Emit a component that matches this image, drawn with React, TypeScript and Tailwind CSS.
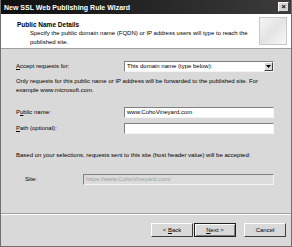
import React from 'react';

function Field({ value, muted }: { value?: string; muted?: boolean }) {
  return (
    <div
      className={`flex-1 h-[11px] flex items-center px-[2px] border border-t-[#808080] border-l-[#808080] border-b-[#f4f4f4] border-r-[#f4f4f4] ${
        muted ? 'bg-[#dcdcdc] text-[#a0a0a0]' : 'bg-white'
      }`}
    >
      {value}
    </div>
  );
}

function Button({ label, active }: { label: React.ReactNode; active?: boolean }) {
  return (
    <div
      className={`w-[42px] h-[14px] flex items-center justify-center bg-[#d9d9d9] border ${
        active
          ? 'border-[#202020] shadow-[inset_1px_1px_0_#fff,inset_-1px_-1px_0_#808080]'
          : 'border-t-white border-l-white border-b-[#404040] border-r-[#404040]'
      }`}
    >
      {label}
    </div>
  );
}

export default function App() {
  return (
    <div className="w-[292px] h-[247px] bg-[#d9d9d9] flex flex-col font-['Liberation_Sans',Arial,sans-serif] text-[6px] leading-[9px] text-black border-l border-r border-b border-[#707070]">
      <div className="h-[14px] shrink-0 flex items-center justify-between pl-[3px] pr-[2px] bg-gradient-to-r from-[#101010] to-[#3c3c3c]">
        <span className="text-white font-bold text-[7px]">New SSL Web Publishing Rule Wizard</span>
        <div className="w-[11px] h-[10px] bg-[#d4d4d4] border border-t-white border-l-white border-b-[#404040] border-r-[#404040] flex items-center justify-center text-[8px] leading-none font-bold">
          ×
        </div>
      </div>

      <div className="h-[35px] shrink-0 bg-white border-b border-[#a0a0a0] flex justify-between pr-[4px]">
        <div className="pl-[16px] pt-[6px]">
          <div className="font-bold text-[6.5px] leading-[9px]">Public Name Details</div>
          <div className="pl-[13px]">
            Specify the public domain name (FQDN) or IP address users will type to reach the
            <br />
            published site.
          </div>
        </div>
        <div className="mt-[3px] w-[28px] h-[28px] border border-[#c8c8c8] bg-gradient-to-br from-[#f4f4f4] via-[#e4e4e4] to-[#f8f8f8]" />
      </div>

      <div className="flex-1 flex flex-col px-[15px] pr-[17px]">
        <div className="mt-[12px] flex items-center">
          <span className="w-[108px]">
            <u>A</u>ccept requests for:
          </span>
          <div className="flex-1 h-[11px] flex items-center justify-between bg-white border border-t-[#808080] border-l-[#808080] border-b-[#f4f4f4] border-r-[#f4f4f4]">
            <span className="pl-[2px]">This domain name (type below):</span>
            <div className="w-[9px] h-[9px] bg-[#d9d9d9] border border-t-white border-l-white border-b-[#404040] border-r-[#404040] flex items-center justify-center">
              <svg width="5" height="3" viewBox="0 0 5 3">
                <path d="M0 0h5L2.5 3z" fill="#000" />
              </svg>
            </div>
          </div>
        </div>

        <p className="mt-[5px]">
          Only requests for this public name or IP address will be forwarded to the published site. For
          <br />
          example www.microsoft.com.
        </p>

        <div className="mt-[12px] flex items-center">
          <span className="w-[108px]">
            P<u>u</u>blic name:
          </span>
          <Field value="www.CohoVineyard.com" />
        </div>

        <div className="mt-[5px] flex items-center">
          <span className="w-[108px]">
            <u>P</u>ath (optional):
          </span>
          <Field />
        </div>

        <p className="mt-[17px]">
          Based on your selections, requests sent to this site (host header value) will be accepted:
        </p>

        <div className="mt-[14px] flex items-center pl-[9px]">
          <span className="w-[58px]">Site:</span>
          <Field value="https://www.CohoVineyard.com/" muted />
        </div>
      </div>

      <div className="h-[33px] shrink-0 border-t border-t-[#a0a0a0] shadow-[inset_0_1px_0_#fff] flex items-start justify-end pt-[9px] pr-[5px]">
        <Button label={<span>&lt; <u>B</u>ack</span>} />
        <div className="ml-[1px]">
          <Button label={<span><u>N</u>ext &gt;</span>} active />
        </div>
        <div className="ml-[8px]">
          <Button label="Cancel" />
        </div>
      </div>
    </div>
  );
}
